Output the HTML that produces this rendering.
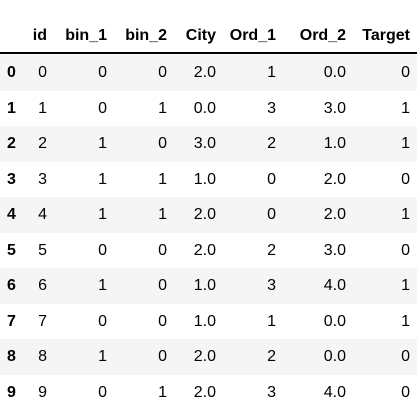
<!DOCTYPE html>
<html><head><style>
body{margin:0;background:#fff;width:420px;height:415px;overflow:hidden;font-family:"Liberation Sans",Arial,sans-serif;font-size:16px;color:#000;position:relative}
.row{position:absolute;left:0;width:417px;height:35.5px}
.g{background:#f5f5f5}
.c{position:absolute;top:0;line-height:36px;white-space:nowrap}
.r{transform:translateX(-100%)}
b{font-weight:bold}
.hdr{position:absolute;left:0;top:52px;width:417px;height:2px;background:#000}
</style></head><body>
<div class="hdr"></div>
<div id="t"></div>
<script>
var cols=[47,107,167,216,276,346,410];
var head=["id","bin_1","bin_2","City","Ord_1","Ord_2","Target"];
var data=[[0,0,0,"2.0",1,"0.0",0],[1,0,1,"0.0",3,"3.0",1],[2,1,0,"3.0",2,"1.0",1],[3,1,1,"1.0",0,"2.0",0],[4,1,1,"2.0",0,"2.0",1],[5,0,0,"2.0",2,"3.0",0],[6,1,0,"1.0",3,"4.0",1],[7,0,0,"1.0",1,"0.0",1],[8,1,0,"2.0",2,"0.0",0],[9,0,1,"2.0",3,"4.0",0]];
var h='<div class="row" style="top:18px">';
head.forEach(function(t,i){h+='<div class="c r" style="left:'+cols[i]+'px"><b>'+t+'</b></div>';});
h+='</div>';
data.forEach(function(r,k){
h+='<div class="row'+(k%2==0?' g':'')+'" style="top:'+(55+k*35.5)+'px"><div class="c" style="left:7px"><b>'+k+'</b></div>';
r.forEach(function(v,i){h+='<div class="c r" style="left:'+cols[i]+'px">'+v+'</div>';});
h+='</div>';});
document.getElementById('t').innerHTML=h;
</script>
</body></html>
